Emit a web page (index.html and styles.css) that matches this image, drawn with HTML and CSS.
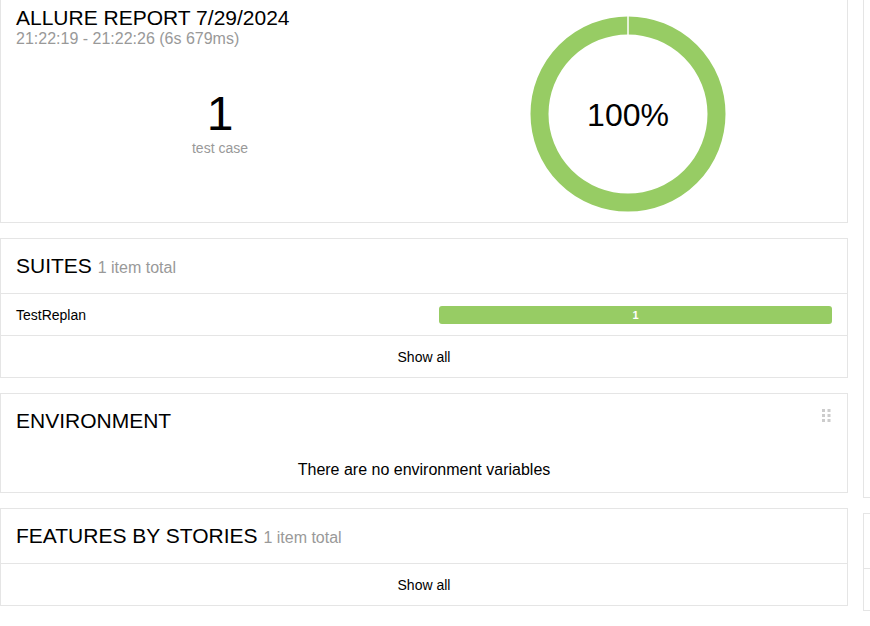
FILE: index.html
```html
<!DOCTYPE html>
<html lang="en">
<head>
<meta charset="utf-8">
<title>Allure Report</title>
<link rel="stylesheet" href="styles.css">
</head>
<body>
<div class="page">
  <div class="col">
    <section class="card summary">
      <div class="summary-info">
        <h2 class="summary-title">ALLURE REPORT 7/29/2024</h2>
        <div class="summary-time">21:22:19 - 21:22:26 (6s 679ms)</div>
        <div class="summary-count">
          <div class="count-num">1</div>
          <div class="count-label">test case</div>
        </div>
      </div>
      <div class="summary-chart">
        <svg class="donut" width="196" height="196" viewBox="0 0 196 196">
          <circle cx="98" cy="98" r="88.5" fill="none" stroke="#97cc64" stroke-width="18"/>
          <line x1="98" y1="0" x2="98" y2="20" stroke="#ffffff" stroke-width="1.5"/>
          <text x="98" y="109.5" text-anchor="middle" class="donut-text">100%</text>
        </svg>
      </div>
    </section>

    <section class="card">
      <div class="card-head"><h2 class="card-title">SUITES <span class="card-sub">1 item total</span></h2></div>
      <div class="row row-item">
        <span class="row-name">TestReplan</span>
        <div class="bar"><div class="bar-fill" style="width:100%">1</div></div>
      </div>
      <div class="row row-link">Show all</div>
    </section>

    <section class="card env">
      <div class="card-head"><h2 class="card-title">ENVIRONMENT</h2></div>
      <svg class="handle" width="9" height="13" viewBox="0 0 9 13">
        <rect x="0" y="0" width="3" height="3"/><rect x="5.5" y="0" width="3" height="3"/>
        <rect x="0" y="5" width="3" height="3"/><rect x="5.5" y="5" width="3" height="3"/>
        <rect x="0" y="10" width="3" height="3"/><rect x="5.5" y="10" width="3" height="3"/>
      </svg>
      <div class="env-body">There are no environment variables</div>
    </section>

    <section class="card">
      <div class="card-head"><h2 class="card-title">FEATURES BY STORIES <span class="card-sub">1 item total</span></h2></div>
      <div class="row row-link">Show all</div>
    </section>
  </div>

  <div class="col side">
    <section class="card side-a"></section>
    <section class="card">
      <div class="card-head"><h2 class="card-title">&nbsp;</h2></div>
      <div class="row row-link"></div>
    </section>
  </div>
</div>
</body>
</html>
```

FILE: styles.css
```css
html, body {
  margin: 0;
  padding: 0;
  overflow: hidden;
  background: #ffffff;
}

body {
  font-family: "Liberation Sans", Arial, sans-serif;
  color: #000000;
}

.page {
  display: grid;
  grid-template-columns: 848px 400px;
  column-gap: 15px;
  align-items: start;
  margin-top: -2px;
}

.col {
  display: flex;
  flex-direction: column;
  gap: 15px;
}

.card {
  position: relative;
  background: #ffffff;
  border: 1px solid #e5e5e5;
}

/* summary */
.summary {
  display: grid;
  grid-template-columns: 438px 1fr;
}

.summary-info {
  padding: 8px 15px 0;
}

.summary-title {
  margin: 0;
  font-size: 21px;
  line-height: 21px;
  font-weight: normal;
}

.summary-time {
  margin-top: 2px;
  font-size: 16px;
  line-height: 18px;
  color: #999999;
}

.summary-count {
  margin-top: 42px;
  text-align: center;
}

.count-num {
  font-size: 48px;
  line-height: 48px;
}

.count-label {
  margin-top: 1px;
  font-size: 14px;
  line-height: 18px;
  color: #999999;
}

.summary-chart {
  padding: 17px 30px 10px 0;
}

.donut {
  display: block;
  margin: 0 auto;
}

.donut-text {
  font-family: "Liberation Sans", Arial, sans-serif;
  font-size: 32px;
  fill: #000000;
}

/* widget cards */
.card-head {
  padding: 15px;
}

.card-title {
  margin: 0;
  height: 24px;
  font-size: 21px;
  line-height: 24px;
  font-weight: normal;
  white-space: nowrap;
}

.card-sub {
  font-size: 16px;
  line-height: 16px;
  color: #999999;
}

.row {
  border-top: 1px solid #e5e5e5;
  height: 41px;
  font-size: 14px;
}

.row-item {
  display: grid;
  grid-template-columns: 1fr 393px;
  align-items: center;
  padding: 0 15px;
}

.bar {
  height: 18px;
}

.bar-fill {
  height: 18px;
  border-radius: 3px;
  background: #97cc64;
  color: #ffffff;
  font-size: 11px;
  font-weight: bold;
  line-height: 18px;
  text-align: center;
}

.row-link {
  display: flex;
  align-items: center;
  justify-content: center;
}

.env-body {
  padding: 12px 15px 12px;
  font-size: 16px;
  line-height: 20px;
  text-align: center;
}

.handle {
  position: absolute;
  top: 15px;
  right: 16px;
  fill: #cccccc;
}

.side-a {
  box-sizing: border-box;
  height: 500px;
}
```
